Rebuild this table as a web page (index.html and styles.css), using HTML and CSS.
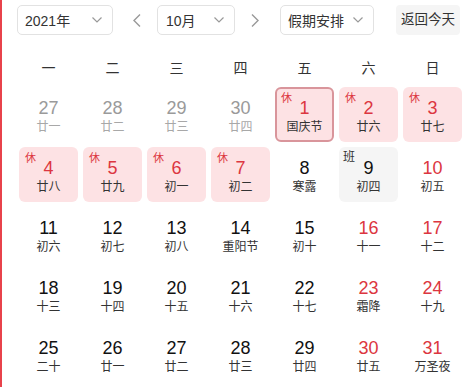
FILE: index.html
```html
<!DOCTYPE html>
<html lang="zh">
<head>
<meta charset="utf-8">
<title>万年历</title>
<link rel="stylesheet" href="styles.css">
</head>
<body>
<div class="app">
  <div class="toolbar">
    <div class="select select-year"><span>2021年</span><svg class="chev" width="10" height="6" viewBox="0 0 10 6"><polyline points="0.5,0.5 5,5 9.5,0.5" fill="none" stroke="#999" stroke-width="1.2"/></svg></div>
    <svg class="arrow arrow-prev" width="8" height="13" viewBox="0 0 8 13"><polyline points="7,0.5 1,6.5 7,12.5" fill="none" stroke="#999" stroke-width="1.4"/></svg>
    <div class="select select-month"><span>10月</span><svg class="chev" width="10" height="6" viewBox="0 0 10 6"><polyline points="0.5,0.5 5,5 9.5,0.5" fill="none" stroke="#999" stroke-width="1.2"/></svg></div>
    <svg class="arrow arrow-next" width="8" height="13" viewBox="0 0 8 13"><polyline points="1,0.5 7,6.5 1,12.5" fill="none" stroke="#999" stroke-width="1.4"/></svg>
    <div class="select select-holiday"><span>假期安排</span><svg class="chev" width="10" height="6" viewBox="0 0 10 6"><polyline points="0.5,0.5 5,5 9.5,0.5" fill="none" stroke="#999" stroke-width="1.2"/></svg></div>
    <div class="today-btn">返回今天</div>
  </div>

  <div class="weekdays">
    <div>一</div><div>二</div><div>三</div><div>四</div><div>五</div><div>六</div><div>日</div>
  </div>

  <div class="grid">
    <div class="cell other"><div class="num">27</div><div class="lunar">廿一</div></div>
    <div class="cell other"><div class="num">28</div><div class="lunar">廿二</div></div>
    <div class="cell other"><div class="num">29</div><div class="lunar">廿三</div></div>
    <div class="cell other"><div class="num">30</div><div class="lunar">廿四</div></div>
    <div class="cell rest selected"><span class="tag">休</span><div class="num">1</div><div class="lunar">国庆节</div></div>
    <div class="cell rest"><span class="tag">休</span><div class="num">2</div><div class="lunar">廿六</div></div>
    <div class="cell rest"><span class="tag">休</span><div class="num">3</div><div class="lunar">廿七</div></div>

    <div class="cell rest"><span class="tag">休</span><div class="num">4</div><div class="lunar">廿八</div></div>
    <div class="cell rest"><span class="tag">休</span><div class="num">5</div><div class="lunar">廿九</div></div>
    <div class="cell rest"><span class="tag">休</span><div class="num">6</div><div class="lunar">初一</div></div>
    <div class="cell rest"><span class="tag">休</span><div class="num">7</div><div class="lunar">初二</div></div>
    <div class="cell"><div class="num">8</div><div class="lunar">寒露</div></div>
    <div class="cell work"><span class="tag">班</span><div class="num">9</div><div class="lunar">初四</div></div>
    <div class="cell weekend"><div class="num">10</div><div class="lunar">初五</div></div>

    <div class="cell"><div class="num">11</div><div class="lunar">初六</div></div>
    <div class="cell"><div class="num">12</div><div class="lunar">初七</div></div>
    <div class="cell"><div class="num">13</div><div class="lunar">初八</div></div>
    <div class="cell"><div class="num">14</div><div class="lunar">重阳节</div></div>
    <div class="cell"><div class="num">15</div><div class="lunar">初十</div></div>
    <div class="cell weekend"><div class="num">16</div><div class="lunar">十一</div></div>
    <div class="cell weekend"><div class="num">17</div><div class="lunar">十二</div></div>

    <div class="cell"><div class="num">18</div><div class="lunar">十三</div></div>
    <div class="cell"><div class="num">19</div><div class="lunar">十四</div></div>
    <div class="cell"><div class="num">20</div><div class="lunar">十五</div></div>
    <div class="cell"><div class="num">21</div><div class="lunar">十六</div></div>
    <div class="cell"><div class="num">22</div><div class="lunar">十七</div></div>
    <div class="cell weekend"><div class="num">23</div><div class="lunar">霜降</div></div>
    <div class="cell weekend"><div class="num">24</div><div class="lunar">十九</div></div>

    <div class="cell"><div class="num">25</div><div class="lunar">二十</div></div>
    <div class="cell"><div class="num">26</div><div class="lunar">廿一</div></div>
    <div class="cell"><div class="num">27</div><div class="lunar">廿二</div></div>
    <div class="cell"><div class="num">28</div><div class="lunar">廿三</div></div>
    <div class="cell"><div class="num">29</div><div class="lunar">廿四</div></div>
    <div class="cell weekend"><div class="num">30</div><div class="lunar">廿五</div></div>
    <div class="cell weekend"><div class="num">31</div><div class="lunar">万圣夜</div></div>
  </div>
</div>
</body>
</html>
```

FILE: styles.css
```css
* { box-sizing: border-box; }
html, body { margin: 0; padding: 0; background: #fff; }
body {
  font-family: "Liberation Sans", Arial, "Noto Sans CJK SC", sans-serif;
  color: #333;
  width: 474px;
  height: 387px;
  overflow: hidden;
}
.app {
  border-left: 2px solid #e8424b;
  height: 387px;
  padding: 5px 0 0 15px;
}
.toolbar {
  display: flex;
  align-items: center;
  height: 30px;
}
.select {
  height: 30px;
  border: 1px solid #e2e2e2;
  border-radius: 5px;
  display: flex;
  align-items: center;
  justify-content: space-between;
  padding: 0 10px 0 7px;
  font-size: 14px;
  color: #333;
}
.select-year { width: 96px; }
.select-month { width: 78px; padding-left: 8px; }
.select-holiday { width: 94px; padding-left: 7px; }
.chev { display: block; }
.arrow { display: block; }
.arrow-prev { margin: 0 16px 0 20px; }
.arrow-next { margin: 0 21px 0 16px; }
.today-btn {
  margin-left: 22px;
  height: 30px;
  padding: 0 5px;
  background: #f5f5f5;
  border-radius: 4px;
  font-size: 13.5px;
  line-height: 30px;
  color: #333;
}
.weekdays {
  display: grid;
  grid-template-columns: repeat(7, 59px);
  column-gap: 5px;
  margin: 22px 0 0 2px;
  height: 22px;
  line-height: 22px;
  font-size: 14px;
  color: #333;
  text-align: center;
}
.grid {
  display: grid;
  grid-template-columns: repeat(7, 59px);
  grid-auto-rows: 55px;
  gap: 5px;
  margin: 8px 0 0 2px;
}
.cell {
  position: relative;
  border-radius: 6px;
  text-align: center;
  padding-top: 10px;
}
.num {
  font-size: 18px;
  line-height: 22px;
  color: #111;
}
.lunar {
  font-size: 12px;
  line-height: 16px;
  color: #333;
}
.tag {
  position: absolute;
  top: 5px;
  left: 6px;
  font-size: 11px;
  line-height: 12px;
}
.other .num { color: #9a9a9a; }
.other .lunar { color: #a8a8a8; }
.weekend .num { color: #dc3640; }
.rest { background: #fde2e4; }
.rest .num { color: #dc3640; }
.rest .tag { color: #dc3640; }
.selected { border: 2px solid #d9959b; padding-top: 8px; }
.selected .tag { top: 3px; left: 4px; }
.work { background: #f5f5f5; }
.work .tag { color: #333; font-size: 12px; top: 4px; left: 4px; }
```
